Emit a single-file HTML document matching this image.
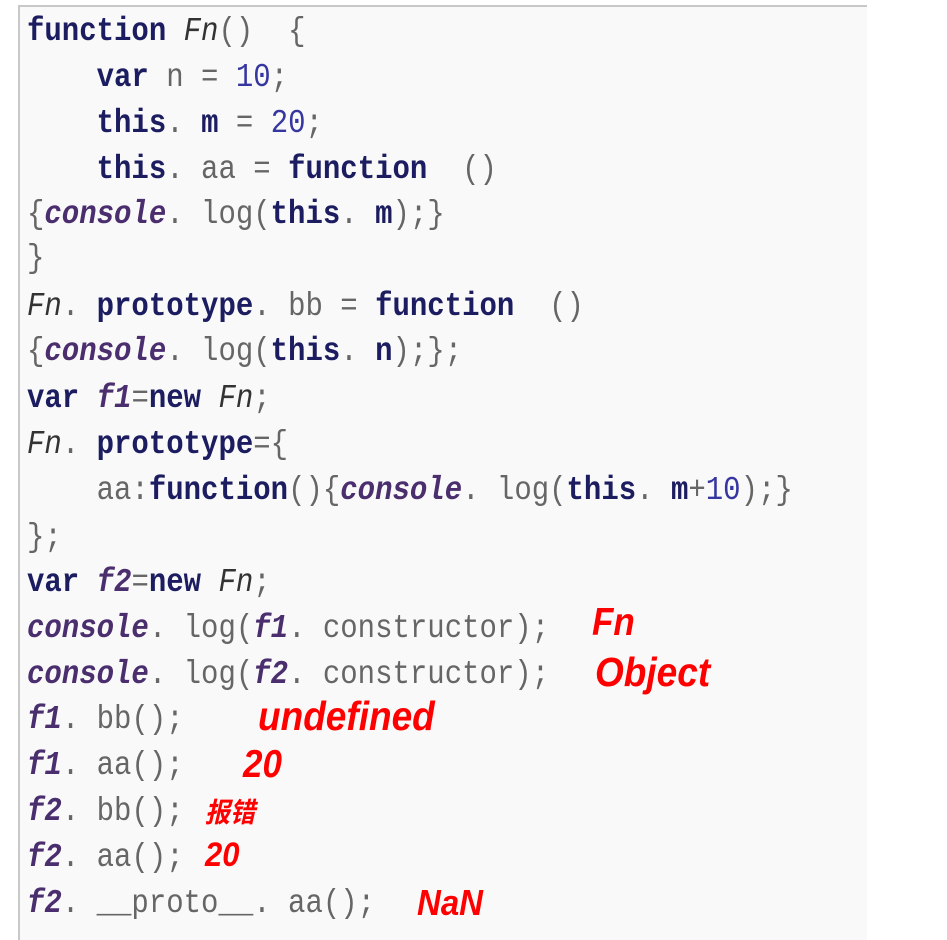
<!DOCTYPE html>
<html><head><meta charset="utf-8"><style>
body{margin:0;background:#fff;width:947px;height:938px;position:relative;overflow:hidden}
.panel{position:absolute;left:18px;top:5px;width:847px;height:933px;background:#f9f9f9;border-left:2px solid #c8c8c8;border-top:2px solid #c8c8c8}
.l{position:absolute;left:27px;height:46px;line-height:46px;font-family:"Liberation Mono",monospace;font-size:29px;color:#666;white-space:pre;transform:scaleY(1.15);transform-origin:0 50%}
.k{color:#1c1c60;font-weight:bold}
.n{color:#3636a0}
.i{color:#4a2e6e;font-style:italic;font-weight:bold}
.fn{color:#333;font-style:italic}
.r{position:absolute;font-family:"Liberation Sans","Noto Sans CJK SC",sans-serif;font-weight:bold;font-style:italic;color:#ff0000;font-size:33px;line-height:46px;height:46px;transform:scaleY(1.1)}
</style></head><body>
<div class="panel"></div>
<div class="l" style="top:9px"><span class="k">function</span> <span class="fn">Fn</span>()  {</div>
<div class="l" style="top:55px">    <span class="k">var</span> n = <span class="n">10</span>;</div>
<div class="l" style="top:101px">    <span class="k">this</span>. <span class="k">m</span> = <span class="n">20</span>;</div>
<div class="l" style="top:147px">    <span class="k">this</span>. aa = <span class="k">function</span>  ()</div>
<div class="l" style="top:192px">{<span class="i">console</span>. log(<span class="k">this</span>. <span class="k">m</span>);}</div>
<div class="l" style="top:236px">}</div>
<div class="l" style="top:284px"><span class="fn">Fn</span>. <span class="k">prototype</span>. bb = <span class="k">function</span>  ()</div>
<div class="l" style="top:329px">{<span class="i">console</span>. log(<span class="k">this</span>. <span class="k">n</span>);};</div>
<div class="l" style="top:376px"><span class="k">var</span> <span class="i">f1</span>=<span class="k">new</span> <span class="fn">Fn</span>;</div>
<div class="l" style="top:422px"><span class="fn">Fn</span>. <span class="k">prototype</span>={</div>
<div class="l" style="top:468px">    aa:<span class="k">function</span>(){<span class="i">console</span>. log(<span class="k">this</span>. <span class="k">m</span>+<span class="n">10</span>);}</div>
<div class="l" style="top:515px">};</div>
<div class="l" style="top:560px"><span class="k">var</span> <span class="i">f2</span>=<span class="k">new</span> <span class="fn">Fn</span>;</div>
<div class="l" style="top:606px"><span class="i">console</span>. log(<span class="i">f1</span>. constructor);</div>
<div class="l" style="top:652px"><span class="i">console</span>. log(<span class="i">f2</span>. constructor);</div>
<div class="l" style="top:697px"><span class="i">f1</span>. bb();</div>
<div class="l" style="top:743px"><span class="i">f1</span>. aa();</div>
<div class="l" style="top:789px"><span class="i">f2</span>. bb();</div>
<div class="l" style="top:835px"><span class="i">f2</span>. aa();</div>
<div class="l" style="top:881px"><span class="i">f2</span>. __proto__. aa();</div>
<div class="r" style="left:592px;top:600px;font-size:35px">Fn</div>
<div class="r" style="left:595px;top:650px;font-size:37px">Object</div>
<div class="r" style="left:258px;top:694px;font-size:37px">undefined</div>
<div class="r" style="left:243px;top:742px;font-size:35px">20</div>
<div class="r" style="left:205px;top:790px;font-size:25px">报错</div>
<div class="r" style="left:205px;top:832px;font-size:31px">20</div>
<div class="r" style="left:417px;top:880px;font-size:33px">NaN</div>
</body></html>
